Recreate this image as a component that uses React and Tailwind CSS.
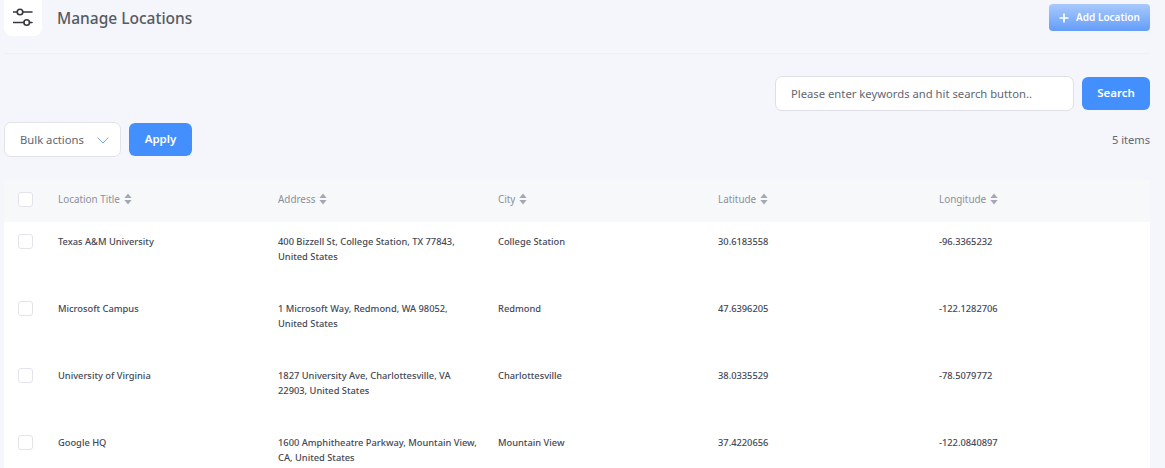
const rows = [
  ["Texas A&M University", "400 Bizzell St, College Station, TX 77843, United States", "College Station", "30.6183558", "-96.3365232"],
  ["Microsoft Campus", "1 Microsoft Way, Redmond, WA 98052, United States", "Redmond", "47.6396205", "-122.1282706"],
  ["University of Virginia", "1827 University Ave, Charlottesville, VA 22903, United States", "Charlottesville", "38.0335529", "-78.5079772"],
  ["Google HQ", "1600 Amphitheatre Parkway, Mountain View, CA, United States", "Mountain View", "37.4220656", "-122.0840897"],
];
const heads = ["Location Title", "Address", "City", "Latitude", "Longitude"];

function Sort() {
  return (
    <svg width="8" height="12" viewBox="0 0 8 12" className="ml-[4px] shrink-0" aria-hidden="true">
      <path d="M4 0.5 L7.6 5 L0.4 5 Z" fill="#a3a9b3" />
      <path d="M4 11.5 L7.6 7 L0.4 7 Z" fill="#a3a9b3" />
    </svg>
  );
}

function Check() {
  return <span className="block h-[15px] w-[15px] rounded-[3px] border border-[#e3e4ea] bg-white" />;
}

export default function App() {
  return (
    <div className="h-[468px] w-[1165px] overflow-hidden bg-[#f4f6fb] pl-[4px] pr-[15px] text-[#3f4450] [font-family:'Noto_Sans',sans-serif]">
      <header className="flex h-[54px] items-start justify-between border-b border-[#eff0f6]">
        <div className="flex items-center">
          <div className="flex h-[36px] w-[38px] items-center justify-center rounded-b-[8px] bg-white">
            <svg width="20" height="20" viewBox="0 0 20 20" fill="none" stroke="#36383e" strokeWidth="1.6" aria-hidden="true">
              <circle cx="7" cy="4" r="2.8" />
              <path d="M0.5 4h3.7M9.8 4h9.2" strokeLinecap="round" />
              <circle cx="13.7" cy="14.5" r="2.8" />
              <path d="M0.5 14.5h10.4M16.5 14.5h2.5" strokeLinecap="round" />
            </svg>
          </div>
          <h1 className="ml-[15px] text-[15.5px] font-medium leading-[36px] text-[#565a63]">Manage Locations</h1>
        </div>
        <button className="mt-[4px] flex h-[27px] w-[101px] items-center justify-center rounded-[4px] bg-gradient-to-b from-[#a9c9fb] to-[#639df8] text-[10px] font-semibold text-white">
          <svg width="10" height="10" viewBox="0 0 10 10" stroke="white" strokeWidth="1.7" className="mr-[7px]" aria-hidden="true">
            <path d="M5 0.5v9M0.5 5h9" />
          </svg>
          Add Location
        </button>
      </header>

      <div className="mt-[22px] flex justify-end">
        <div className="flex h-[35px] w-[299px] items-center rounded-[7px] border border-[#dfe0e7] bg-white pl-[15px] pt-[1px] text-[11.25px] text-[#62666f]">
          Please enter keywords and hit search button..
        </div>
        <button className="ml-[8px] mt-[1px] h-[33px] w-[68px] rounded-[6px] bg-[#448ffe] pb-[1px] text-[11.5px] font-semibold text-white">Search</button>
      </div>

      <div className="mt-[11px] flex items-center justify-between">
        <div className="flex items-center">
          <div className="flex h-[35px] w-[117px] items-center justify-between rounded-[7px] border border-[#e2e3e9] bg-white pl-[15px] pr-[11px] pt-[1px] text-[11.25px] text-[#62666f]">
            Bulk actions
            <svg width="12" height="7" viewBox="0 0 12 7" fill="none" stroke="#7ea6e8" strokeWidth="1" aria-hidden="true">
              <path d="M0.5 0.5 L6 6 L11.5 0.5" />
            </svg>
          </div>
          <button className="ml-[8px] h-[33px] w-[63px] rounded-[6px] bg-[#448ffe] pb-[1px] text-[11.5px] font-semibold text-white">Apply</button>
        </div>
        <span className="pt-[1px] text-[11.1px] text-[#62666f]">5 items</span>
      </div>

      <div className="mt-[23px]">
        <div className="grid h-[42px] grid-cols-[54px_220px_220px_220px_221px_211px] items-center bg-[#f7f8fa] pb-[3px]">
          <div className="pl-[14px]"><Check /></div>
          {heads.map((h) => (
            <div key={h} className="flex items-center text-[9.9px] text-[#8b8f99]">
              {h}
              <Sort />
            </div>
          ))}
        </div>
        {rows.map((r) => (
          <div key={r[0]} className="grid h-[67px] grid-cols-[54px_220px_220px_220px_221px_211px] bg-white pt-[12px] text-[9.3px] font-medium leading-[15px] text-[#434854]">
            <div className="pl-[14px]"><Check /></div>
            <div>{r[0]}</div>
            <div className="w-[200px]">{r[1]}</div>
            <div>{r[2]}</div>
            <div>{r[3]}</div>
            <div>{r[4]}</div>
          </div>
        ))}
      </div>
    </div>
  );
}
